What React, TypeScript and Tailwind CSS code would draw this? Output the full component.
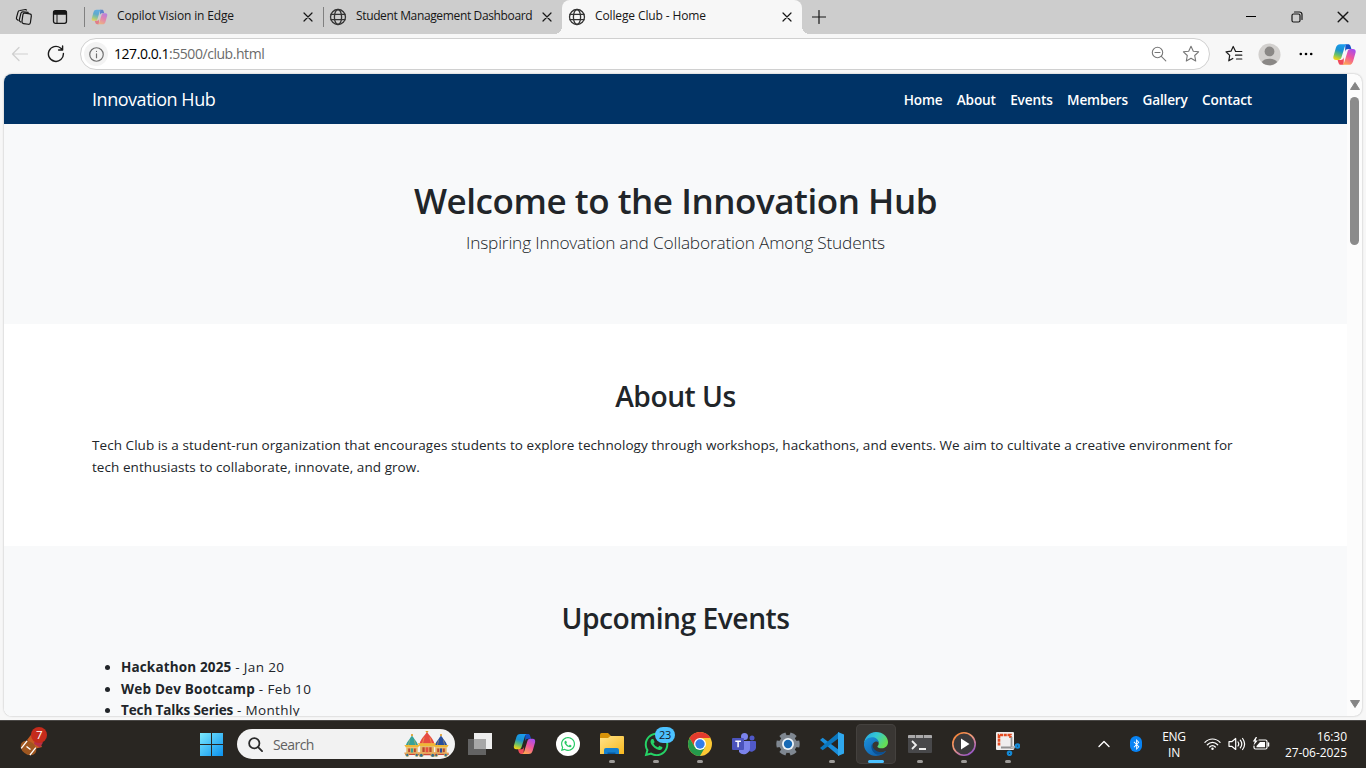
import React from "react";
import { FaWhatsapp, FaBluetoothB } from "react-icons/fa";

const stroke = { fill: "none", stroke: "currentColor", strokeLinecap: "round", strokeLinejoin: "round" } as const;

function Copilot({ id, className }: { id: string; className: string }) {
  return (
    <svg viewBox="0 0 24 24" className={className}>
      <defs>
        <linearGradient id={id + "a"} x1="0.6" y1="0" x2="0.3" y2="1">
          <stop offset="0" stopColor="#1a9bef" />
          <stop offset=".4" stopColor="#1993cf" />
          <stop offset=".7" stopColor="#68c06a" />
          <stop offset="1" stopColor="#f3d515" />
        </linearGradient>
        <linearGradient id={id + "b"} x1="0.8" y1="0" x2="0.3" y2="1">
          <stop offset="0" stopColor="#a44df0" />
          <stop offset=".5" stopColor="#f0569b" />
          <stop offset="1" stopColor="#ffa451" />
        </linearGradient>
      </defs>
      <path d="M13 1.200h2.600c1.400 0 2.200.7 2.600 2l1 3.100h-3.200c-2 0-2.800.8-3.400 2.800z" fill="#1453c7" />
      <path d="M11 22.800H8.400c-1.400 0-2.200-.7-2.600-2l-1-3.100H8c2 0 2.800-.8 3.400-2.800z" fill="#ef4a5b" />
      <path d="M7.500 1.200h7c-1.500.5-1.900 1.800-2.500 3.600L8.800 15.200c-.6 1.700-1.400 2.500-3.200 2.500H3.200C.7 17.700-.1 16 .5 13.700L3 5c.8-2.600 2-3.800 4.500-3.800z" fill={`url(#${id}a)`} />
      <path d="M16.500 22.800h-7c1.500-.5 1.900-1.800 2.500-3.600l3.200-10.400c.6-1.700 1.400-2.500 3.200-2.500h2.400c2.500 0 3.300 1.700 2.700 4L21 19c-.8 2.600-2 3.800-4.500 3.800z" fill={`url(#${id}b)`} />
    </svg>
  );
}

function Globe() {
  return (
    <svg viewBox="0 0 18 18" className="h-[18px] w-[18px] shrink-0 text-[#333]" {...stroke} strokeWidth="1.300">
      <circle cx="9" cy="9" r="7.500" />
      <ellipse cx="9" cy="9" rx="3.600" ry="7.500" />
      <path d="M2 6.300h14M2 11.700h14" />
    </svg>
  );
}

function Cross({ className }: { className: string }) {
  return (
    <svg viewBox="0 0 10 10" className={className} {...stroke} strokeWidth="1.200">
      <path d="M1 1l8 8M9 1L1 9" />
    </svg>
  );
}

function TabStrip() {
  return (
    <div className="flex h-[34px] shrink-0 items-center bg-[#cdcdcd] pb-px text-[12px] text-[#161616]">
      <svg viewBox="0 0 18 18" className="ml-[15px] h-[18px] w-[18px]" {...stroke} strokeWidth="1.200">
        <rect x="7.500" y="5.500" width="8.500" height="10.500" rx="1.800" transform="rotate(8 12 10)" />
        <path d="M5.800 14l-.7-.4a1.800 1.800 0 0 1-.7-2.200l1.500-6a2 2 0 0 1 2-1.500l5.300.4M3 12.200l-.9-.6a1.800 1.800 0 0 1-.6-2l1.500-5.500A2 2 0 0 1 5 2.500L10.500 1.500l1 .5" />
      </svg>
      <svg viewBox="0 0 16 16" className="ml-[19px] h-4 w-4" {...stroke} strokeWidth="1.300">
        <rect x="1.500" y="1.700" width="13" height="12.600" rx="2" />
        <path d="M2 2.500h12v2.600H2z" fill="currentColor" />
        <path d="M5 5v9" strokeWidth="1" />
      </svg>
      <div className="ml-4 h-5 w-px bg-[#808080]" />
      <div className="flex w-[238px] items-center">
        <Copilot id="tab" className="ml-1.5 h-4 w-[17px] opacity-60" />
        <span className="ml-[9px] flex-1 whitespace-nowrap pb-px tracking-[-0.15px]">Copilot Vision in Edge</span>
        <Cross className="mr-[10px] h-[10px] w-[10px]" />
      </div>
      <div className="h-5 w-px bg-[#808080]" />
      <div className="flex w-[238px] items-center">
        <div className="ml-[5px]"><Globe /></div>
        <span className="ml-[9px] flex-1 whitespace-nowrap pb-px tracking-[-0.36px]">Student Management Dashboard</span>
        <Cross className="mr-[10px] h-[10px] w-[10px]" />
      </div>
      <div className="relative -mb-px flex h-[34px] w-60 items-center rounded-t-lg bg-[#f7f7f7] pb-px">
        <div className="absolute -left-2 bottom-0 h-2 w-2 bg-[radial-gradient(circle_at_0_0,#cdcdcd_8px,#f7f7f7_8px)]" />
        <div className="absolute -right-2 bottom-0 h-2 w-2 bg-[radial-gradient(circle_at_100%_0,#cdcdcd_8px,#f7f7f7_8px)]" />
        <div className="ml-1.5"><Globe /></div>
        <span className="ml-[9px] flex-1 whitespace-nowrap pb-px tracking-[-0.12px]">College Club - Home</span>
        <Cross className="mr-[10px] h-[10px] w-[10px]" />
      </div>
      <svg viewBox="0 0 14 14" className="ml-[10px] h-[14px] w-[14px]" {...stroke} strokeWidth="1.200">
        <path d="M7 .5v13M.5 7h13" />
      </svg>
      <div className="ml-auto flex w-[120px] items-center">
        <div className="h-px w-[10px] bg-black" />
        <svg viewBox="0 0 12 12" className="ml-[35px] h-3 w-3" {...stroke} strokeWidth="1.200">
          <rect x="1" y="3" width="8" height="8" rx="1.500" />
          <path d="M3.500 1h5A2.500 2.500 0 0 1 11 3.500v5" />
        </svg>
        <Cross className="ml-[34px] h-3 w-3" />
      </div>
    </div>
  );
}

function Toolbar() {
  return (
    <div className="flex h-10 shrink-0 items-center bg-[#f7f7f7]">
      <svg viewBox="0 0 18 16" className="ml-[11px] h-4 w-[18px] text-[#cfcfcf]" {...stroke} strokeWidth="1.200">
        <path d="M16.500 8H1.500M8 1.500L1.500 8 8 14.500" />
      </svg>
      <svg viewBox="0 0 18 18" className="ml-[18px] h-[18px] w-[18px] text-[#1b1b1b]" {...stroke} strokeWidth="1.400">
        <path d="M16.400 8.500A7.500 7.500 0 1 1 13.500 3l2 1.600M15.600 1v4h-4" />
      </svg>
      <div className="ml-[15px] flex h-8 w-[1130px] items-center rounded-full border border-[#d0d0d0] bg-white">
        <div className="ml-[3px] flex h-6 w-6 items-center justify-center rounded-full bg-[#f3f3f3]">
          <svg viewBox="0 0 14 14" className="h-[15px] w-[15px] text-[#6f6f6f]" {...stroke} strokeWidth="1.100">
            <circle cx="7" cy="7" r="6.300" />
            <path d="M7 6.300v3.700M7 4v.2" />
          </svg>
        </div>
        <span className="ml-1.5 flex-1 pb-px text-[14px] tracking-[-0.45px] text-[#6b6b6b]">
          <span className="text-black">127.0.0.1</span>:5500/club.html
        </span>
        <svg viewBox="0 0 16 16" className="mr-[15px] h-4 w-4 text-[#777]" {...stroke} strokeWidth="1.100">
          <circle cx="6.500" cy="6.500" r="5.200" />
          <path d="M10.300 10.300l4.500 4.500M4 6.500h5" />
        </svg>
        <svg viewBox="0 0 18 18" className="mr-[9px] h-[18px] w-[18px] text-[#777]" {...stroke} strokeWidth="1.100">
          <path d="M9 1.200l2.300 5 5.300.6-3.900 3.700 1 5.500L9 13.300 4.300 16l1-5.500L1.400 6.800l5.300-.6z" />
        </svg>
      </div>
      <svg viewBox="0 0 18 18" className="ml-[15px] h-[18px] w-[18px] text-[#1b1b1b]" {...stroke} strokeWidth="1.200">
        <path d="M10.500 6.200L8.200 1.500 6 6.200l-5 .6 3.700 3.600-.9 5.400 4-2.300M10.500 6.500h6.300M10.500 10.200h6.300M11.500 14h5.300" />
      </svg>
      <svg viewBox="0 0 24 24" className="ml-[15px] h-[23px] w-[23px]">
        <circle cx="12" cy="12" r="11.500" fill="#d2d0ce" />
        <circle cx="12" cy="8.800" r="5.100" fill="#8a8886" />
        <path d="M4 19.900c2-4.700 14-4.700 16 0-3.600 4.500-12.400 4.500-16 0z" fill="#8a8886" />
      </svg>
      <svg viewBox="0 0 14 4" className="ml-[18px] h-1 w-[14px]">
        <circle cx="1.800" cy="2" r="1.300" /><circle cx="7" cy="2" r="1.300" /><circle cx="12.200" cy="2" r="1.300" />
      </svg>
      <Copilot id="bar" className="ml-5 h-[23px] w-[23px]" />
    </div>
  );
}

function ClubPage() {
  return (
    <div className="mx-1 flex h-[642px] shrink-0 overflow-hidden rounded-lg bg-[#fcfcfc] shadow-[0_0_2px_rgba(0,0,0,0.3)]">
      <div className="flex w-[1343px] flex-col overflow-hidden bg-white text-[13.5px] leading-[21.6px] text-[#212529]">
        <nav className="flex h-[50px] shrink-0 items-center bg-[#003366] pl-[88px] pr-[95px] text-white">
          <span className="mt-px text-[18px] tracking-[-0.46px]">Innovation Hub</span>
          <div className="ml-auto mt-px flex gap-[14.4px] whitespace-nowrap text-[13.6px] font-semibold tracking-[-0.15px]">
            <span>Home</span><span>About</span><span>Events</span><span>Members</span><span>Gallery</span><span>Contact</span>
          </div>
        </nav>
        <header className="flex h-[200px] shrink-0 flex-col items-center whitespace-nowrap bg-[#f8f9fa] pt-[55px]">
          <h1 className="text-[35px] font-semibold leading-[43px] tracking-[-0.45px]">Welcome to the Innovation Hub</h1>
          <p className="mt-[7px] text-[17.3px] font-light leading-[27px] tracking-[-0.19px]">Inspiring Innovation and Collaboration Among Students</p>
        </header>
        <section className="h-[222px] shrink-0 pl-[88px] pt-[55px]">
          <h2 className="pr-[88px] text-center text-[28.2px] font-semibold leading-[35px] tracking-[-0.47px]">About Us</h2>
          <div className="mt-[21px] whitespace-nowrap tracking-[0.06px]">
            <p>Tech Club is a student-run organization that encourages students to explore technology through workshops, hackathons, and events. We aim to cultivate a creative environment for</p>
            <p>tech enthusiasts to collaborate, innovate, and grow.</p>
          </div>
        </section>
        <section className="h-[400px] shrink-0 bg-[#f8f9fa] pl-[88px] pt-[55px]">
          <h2 className="pr-[88px] text-center text-[28.2px] font-semibold leading-[35px] tracking-[-0.47px]">Upcoming Events</h2>
          <ul className="mt-[21px] list-disc pl-[29px] tracking-[0.35px]">
            <li><b className="tracking-[0.15px]">Hackathon 2025</b> - Jan 20</li>
            <li><b className="tracking-[0.2px]">Web Dev Bootcamp</b> - Feb 10</li>
            <li><b className="tracking-[-0.12px]">Tech Talks Series</b> - Monthly</li>
          </ul>
        </section>
      </div>
      <div className="flex w-[15px] flex-col items-center pt-2">
        <svg viewBox="0 0 10 8" className="h-2 w-[10px]"><path d="M5 .5L9.500 7.500H.5z" fill="#858585" stroke="#858585" strokeLinejoin="round" /></svg>
        <div className="mt-[7px] h-[148px] w-[9px] rounded-full bg-[#8b8b8b]" />
        <svg viewBox="0 0 10 8" className="mb-2 mt-auto h-2 w-[10px]"><path d="M5 7.500L9.500.5H.5z" fill="#858585" stroke="#858585" strokeLinejoin="round" /></svg>
      </div>
    </div>
  );
}

function TaskItem({ children, running, active }: { children: React.ReactNode; running?: boolean; active?: boolean }) {
  return (
    <div className="flex w-11 shrink-0 justify-center">
      <div className={"relative flex h-10 w-10 items-center justify-center rounded-[5px] " + (active ? "bg-[#393633] ring-1 ring-inset ring-[#44413e]" : "")}>
        {children}
        {running && <div className="absolute bottom-[1px] left-[17px] h-[3px] w-1.5 rounded-full bg-[#9c9a98]" />}
        {active && <div className="absolute bottom-[1px] left-3 h-[3px] w-4 rounded-full bg-[#4cc2ff]" />}
      </div>
    </div>
  );
}

function Dome({ x, y, s, c }: { x: number; y: number; s: number; c: string }) {
  return (
    <g transform={`translate(${x} ${y}) scale(${s})`}>
      <path d="M0-12c.6 2 1.500 2.500 2.500 4 2 2.500 3.500 4.500 4 7h-13c.5-2.500 2-4.500 4-7C-1.500-9.500-.6-10 0-12z" fill={c} />
      <path d="M-2.500-6.500L-4-1M2.500-6.500L4-1" stroke="#efbb50" strokeWidth=".5" />
      <path d="M-8-1.500H8L6.500 1h-13z" fill="#efb735" />
      <path d="M-6 1H6v6H-6z" fill="#e3b463" />
      <path d="M-4 2h2v4h-2zM2 2h2v4H2z" fill="#b8452f" />
      <path d="M-1.200 2h2.400v5h-2.400z" fill={c} />
      <path d="M-8 6.500H8V9H-7z" fill="#c84838" />
      <path d="M-8 7H8" stroke="#f7d872" />
      <circle cx="-5" cy="9" r="1.700" fill="#326a8b" stroke="#f0c55a" strokeWidth=".6" />
      <circle cx="5" cy="9" r="1.700" fill="#326a8b" stroke="#f0c55a" strokeWidth=".6" />
      <circle cy="-12" r="1.100" fill="#df9a23" />
    </g>
  );
}

const gearTeeth = [0, 60, 120, 180, 240, 300];

function Taskbar() {
  return (
    <div className="flex h-12 shrink-0 items-center bg-[#292622] text-white shadow-[inset_0_1px_0_#4a4846]">
      <div className="w-[189px] pl-5">
        <svg viewBox="0 0 28 32" className="-mt-1 h-8 w-7">
          <path d="M7 14L14 5l8 16-8 2z" fill="#c75b23" />
          <path d="M14 18l6 3.500 3-5-8-3z" fill="#b82f46" />
          <g transform="rotate(38 8.500 22)">
            <ellipse cx="8.500" cy="22" rx="8.500" ry="6.500" fill="#9f5720" />
            <path d="M3 17.200v9.600M14 17.200v9.600M6 22h5" stroke="#fff" strokeWidth="1.300" />
          </g>
          <circle cx="19" cy="9" r="8" fill="#c42b1c" />
          <text x="19.400" y="13.200" textAnchor="middle" fill="#fff" fontSize="11.500" fontFamily="Open Sans, sans-serif">7</text>
        </svg>
      </div>
      <TaskItem>
        <svg viewBox="0 0 23 23" className="h-[23px] w-[23px]">
          <defs><linearGradient id="win" x1="0" y1="0" x2="23" y2="23" gradientUnits="userSpaceOnUse"><stop stopColor="#7ceaff" /><stop offset="1" stopColor="#0a90ed" /></linearGradient></defs>
          <path d="M0 0h11v11H0zM12 0h11v11H12zM0 12h11v11H0zM12 12h11v11H12z" fill="url(#win)" />
        </svg>
      </TaskItem>
      <div className="ml-1 flex h-[30px] w-[218px] items-center rounded-full bg-[#f2f2f2]">
        <svg viewBox="0 0 16 16" className="ml-[11px] h-[15px] w-[15px] text-[#2a2a2a]" {...stroke} strokeWidth="1.900">
          <circle cx="6.700" cy="6.700" r="5.500" /><path d="M11 11l4 4" />
        </svg>
        <span className="ml-[10px] flex-1 text-[14px] tracking-[-0.6px] text-[#616161]">Search</span>
        <svg viewBox="0 0 48 26" className="mr-1 h-[26px] w-12">
          <Dome x={9} y={15.5} s={0.95} c="#37a297" />
          <Dome x={38} y={15.5} s={0.95} c="#294f9c" />
          <Dome x={24} y={14} s={1.15} c="#e64b42" />
        </svg>
      </div>
      <div className="w-[3px]" />
      <TaskItem>
        <svg viewBox="0 0 24 22" className="h-[22px] w-6">
          <path d="M6 0h18v16H6z" fill="#ededed" />
          <path d="M0 6h18v16H0z" fill="#636363" />
          <path d="M6 6h12v10H6z" fill="#a7a7a7" />
        </svg>
      </TaskItem>
      <TaskItem><Copilot id="task" className="h-[22px] w-[23px]" /></TaskItem>
      <TaskItem>
        <div className="flex h-6 w-6 items-center justify-center rounded-full bg-white text-[#25c964]"><FaWhatsapp size={16} /></div>
      </TaskItem>
      <TaskItem running>
        <svg viewBox="0 0 24 22" className="h-[22px] w-6">
          <defs><linearGradient id="fold" x1="0" y1="0" x2="1" y2="1"><stop stopColor="#ffe38a" /><stop offset="1" stopColor="#f8b81e" /></linearGradient></defs>
          <path d="M0 1.500Q0 0 1.500 0H8l3 3v4H0z" fill="#d79208" />
          <path d="M0 5h8l2.500-2H23q1 0 1 1v17H0z" fill="url(#fold)" />
          <path d="M4 21v-4q0-2 2-2h11q2 0 2 2v4z" fill="#1580cf" />
          <path d="M7.500 21v-1.500h8V21z" fill="#0759a0" />
        </svg>
      </TaskItem>
      <TaskItem running>
        <FaWhatsapp size={27} color="#25d366" />
        <span className="absolute left-[19px] top-[3px] flex h-4 w-5 items-center justify-center rounded-full bg-[#4cc2ff] text-[11px] tracking-[-0.3px] text-[#182128]">23</span>
      </TaskItem>
      <TaskItem running>
        <svg viewBox="0 0 24 24" className="h-6 w-6">
          <circle cx="12" cy="12" r="12" fill="#fcc934" />
          <path d="M1.610 6A12 12 0 0 1 22.390 6H12L6.800 15z" fill="#e33b2e" />
          <path d="M1.610 6A12 12 0 0 0 12 24L17.200 15 12 12 6.800 15z" fill="#249a4b" />
          <circle cx="12" cy="12" r="6" fill="#fff" /><circle cx="12" cy="12" r="4.700" fill="#317de9" />
        </svg>
      </TaskItem>
      <TaskItem>
        <svg viewBox="0 0 24 22" className="h-[22px] w-6">
          <circle cx="20" cy="5" r="2.500" fill="#5059c9" />
          <path d="M16 8h7q1 0 1 1v6a4.500 4.500 0 0 1-8 2z" fill="#5059c9" />
          <circle cx="12.500" cy="3.600" r="3.500" fill="#7b83eb" />
          <path d="M7 8h11v7a6.200 6.200 0 0 1-11 4z" fill="#7b83eb" />
          <rect y="5" width="12" height="12" rx="1" fill="#4b53bc" />
          <path d="M3.300 8.300h5.600M6.100 8.300v6" stroke="#fff" strokeWidth="1.500" />
        </svg>
      </TaskItem>
      <TaskItem>
        <svg viewBox="0 0 24 24" className="h-6 w-6">
          {gearTeeth.map((a) => <path key={a} d="M8.500.8Q12-.2 15.500.8L14.800 6H9.200z" fill="#7f8791" transform={`rotate(${a + 30} 12 12)`} />)}
          <circle cx="12" cy="12" r="9" fill="#7f8791" />
          <circle cx="12" cy="12" r="6" fill="#edf3f8" /><circle cx="12" cy="12" r="4.200" fill="#1769b5" />
        </svg>
      </TaskItem>
      <TaskItem running>
        <svg viewBox="0 0 24 24" className="h-6 w-6">
          <path d="M0 8l2.700-2.200L19 18v6z" fill="#1a8edb" />
          <path d="M0 16l2.700 2.200L19 6V0z" fill="#0b77bf" />
          <path d="M18 0l6 2.500v19L18 24z" fill="#2fa8ee" />
        </svg>
      </TaskItem>
      <TaskItem active>
        <svg viewBox="0 0 24 24" className="h-6 w-6">
          <defs>
            <linearGradient id="edgeA" x1="0" y1="0" x2="1" y2=".5"><stop stopColor="#239fe7" /><stop offset=".5" stopColor="#34c8d2" /><stop offset="1" stopColor="#65dc55" /></linearGradient>
            <linearGradient id="edgeB" x1="0" y1="0" x2="1" y2="1"><stop stopColor="#1c91dc" /><stop offset="1" stopColor="#0c56a2" /></linearGradient>
          </defs>
          <path d="M0 12C.2 5 5.500 0 12 0c6.800 0 12 4.700 12 10 0 4-3 6.300-6.300 6.300-2.800 0-4.300-1-4.300-1.900 0-.6 1.300-1.200 1.300-3C14.700 8.500 12 6 8 6c-4 0-7 2.500-8 6z" fill="url(#edgeA)" />
          <path d="M0 12c.5-4 4-6.800 8-6.800 3.500 0 6.500 2 6.700 5.500-1-1.200-2-1.500-3-1.200-3.500 1-4.500 5-2.500 8 3 4.300 9.500 3.800 13 1.300C20.500 21.700 16.500 24 12 24 5.500 24-.5 18.500 0 12z" fill="url(#edgeB)" />
          <path d="M8.500 11c-3 5 .5 10.500 5 11.500 3.500.5 6.700-1 8.700-3.700-3.500 2.200-8.500 2-11.500-1C8.600 15.800 8 13 8.500 11z" fill="#0c4f91" />
        </svg>
      </TaskItem>
      <TaskItem running>
        <svg viewBox="0 0 24 18" className="h-[18px] w-6">
          <rect width="24" height="18" rx="1" fill="#48484a" />
          <path d="M0 1q0-1 1-1h22q1 0 1 1v2H0z" fill="#aaa9aa" /><path d="M7.500 0v3M15.500 0v3" stroke="#555" />
          <path d="M4 6l4 4-4 4M11 14h7" fill="none" stroke="#eee" strokeWidth="1.800" />
        </svg>
      </TaskItem>
      <TaskItem running>
        <svg viewBox="0 0 24 24" className="h-6 w-6">
          <defs><linearGradient id="media" x1="0" y1="0" x2=".7" y2="1"><stop stopColor="#f77d24" /><stop offset=".5" stopColor="#ed9a7c" /><stop offset="1" stopColor="#9a57c7" /></linearGradient></defs>
          <circle cx="12" cy="12" r="11.200" fill="#3a393b" stroke="url(#media)" strokeWidth="1.600" />
          <path d="M9 6.500l8.500 5.500L9 17.500z" fill="#fff" />
        </svg>
      </TaskItem>
      <TaskItem running>
        <svg viewBox="0 0 24 24" className="h-6 w-6">
          <rect width="18" height="18" rx="1" fill="#efeeee" />
          <path d="M3 13.500V3h11.500v3" fill="none" stroke="#e44a20" strokeWidth="2.600" strokeDasharray="3.100 .7" />
          <path d="M15.500 5v12M5 15.500h14" stroke="#929292" strokeWidth="1.800" />
          <path d="M15 16l5-2" stroke="#bbb" strokeWidth="1.500" />
          <circle cx="21.500" cy="14" r="1.700" fill="none" stroke="#1489d6" strokeWidth="2.200" />
          <circle cx="13.500" cy="21.300" r="1.700" fill="none" stroke="#1489d6" strokeWidth="2.200" />
        </svg>
      </TaskItem>
      <svg viewBox="0 0 12 8" className="ml-[68px] h-2 w-3" {...stroke} strokeWidth="1.400"><path d="M1 6.500l5-5 5 5" /></svg>
      <div className="ml-5 flex h-4 w-3 items-center justify-center rounded-full bg-[#0883f4]"><FaBluetoothB size={11} /></div>
      <div className="ml-[17px] w-[30px] pt-px text-center text-[12px] leading-4 tracking-[-0.25px]">ENG<br />IN</div>
      <svg viewBox="0 0 18 14" className="ml-[15px] h-[14px] w-[17px]" {...stroke} strokeWidth="1.300">
        <path d="M1 5.300c4.500-4.800 11.500-4.800 16 0M3.500 7.800c3.300-3.500 7.700-3.500 11 0M6 10.200c1.800-2 4.200-2 6 0" />
        <circle cx="9" cy="12" r="1.300" fill="white" stroke="none" />
      </svg>
      <svg viewBox="0 0 18 14" className="ml-[7px] h-[14px] w-[18px]" {...stroke} strokeWidth="1.200">
        <path d="M1 4.700h2.700l4-3.200v11l-4-3.200H1zM10 5q1.500 2 0 4M12.300 3.200q3 3.800 0 7.600M14.600 1.500q4 5.500 0 11" />
      </svg>
      <svg viewBox="0 0 18 14" className="ml-[6px] h-[14px] w-[18px]" {...stroke} strokeWidth="1.200">
        <path d="M7 3h6.500q1.500 0 1.500 1.500v6q0 1.500-1.500 1.500H3.500Q2 12 2 10.500V9" />
        <path d="M16.500 6v3" strokeWidth="1.600" />
        <path d="M4.500 10.200V9L8 5h5v5.200z" fill="currentColor" stroke="none" />
        <path d="M3.800 0L.8 4.500h2L1.500 8.500 5.800 3.500H3.600L5 0z" fill="currentColor" stroke="none" />
      </svg>
      <div className="ml-auto mr-[19px] whitespace-nowrap pt-px text-right text-[12px] leading-4 tracking-[-0.05px]">16:30<br />27-06-2025</div>
    </div>
  );
}

export default function App() {
  return (
    <div className="flex h-[768px] w-[1366px] flex-col overflow-hidden bg-[#f7f7f7] font-['Open_Sans','Noto_Sans',sans-serif]">
      <TabStrip />
      <Toolbar />
      <ClubPage />
      <div className="h-1 shrink-0" />
      <Taskbar />
    </div>
  );
}
